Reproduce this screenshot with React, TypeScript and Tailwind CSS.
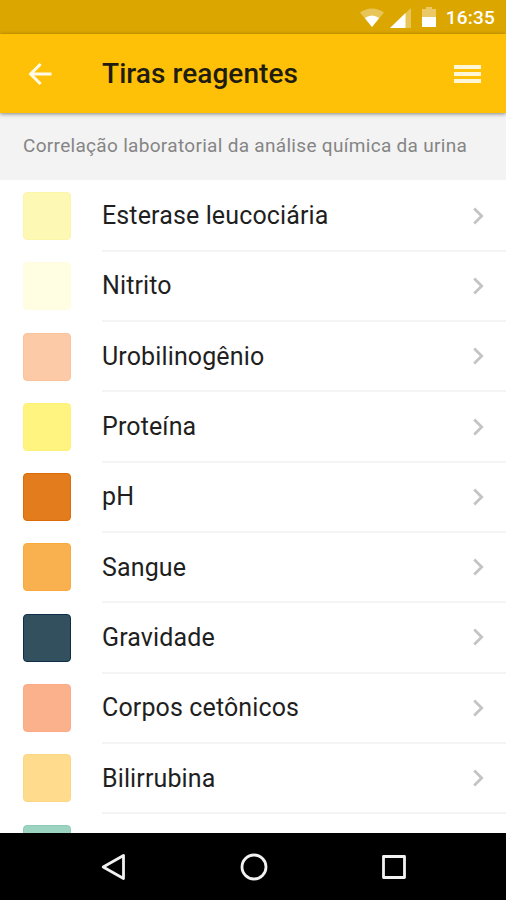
type Reagent = {
  name?: string;
  swatch: string;
};

const reagents: Reagent[] = [
  { name: 'Esterase leucociária', swatch: 'bg-[#fdf8b4] border-[#fbf6ac]' },
  { name: 'Nitrito', swatch: 'bg-[#fffee3] border-[#fffde0]' },
  { name: 'Urobilinogênio', swatch: 'bg-[#fccaa6] border-[#fac39c]' },
  { name: 'Proteína', swatch: 'bg-[#fff480] border-[#fff176]' },
  { name: 'pH', swatch: 'bg-[#e27c1c] border-[#dc6c0a]' },
  { name: 'Sangue', swatch: 'bg-[#f9b04f] border-[#fba93c]' },
  { name: 'Gravidade', swatch: 'bg-[#33505e] border-[#0f2f48]' },
  { name: 'Corpos cetônicos', swatch: 'bg-[#fcb18d] border-[#fbab86]' },
  { name: 'Bilirrubina', swatch: 'bg-[#fedb8d] border-[#fdd680]' },
  { swatch: 'bg-[#9dd3c1] border-[#8fcab6]' },
];

function StatusBar() {
  return (
    <div className="flex h-[34px] shrink-0 items-center justify-end bg-[#dca600] pr-[11px] text-white">
      <svg width="24" height="20" viewBox="0 0 24 20" className="mt-[2px] mr-[5px]">
        <path d="M0 4.5Q12-3.5 24 4.5L12 19Z" fill="#fff" opacity="0.35" />
        <path d="M4.8 10Q12 4.8 19.2 10L12 19Z" fill="#fff" />
      </svg>
      <svg width="22" height="21" viewBox="0 0 22 21" className="mt-[2px] mr-[11px]">
        <path d="M22 0V20H1Z" fill="#fff" opacity="0.35" />
        <path d="M16.5 5V20H1Z" fill="#fff" />
      </svg>
      <svg width="14" height="21" viewBox="0 0 14 21" className="mr-[10px]">
        <path d="M4 0h6v2h4v9H0V2h4z" fill="#fff" opacity="0.4" />
        <path d="M0 10h14v10H0z" fill="#fff" />
      </svg>
      <span className="text-[19px] leading-none font-medium tracking-[0.2px]">16:35</span>
    </div>
  );
}

function AppBar() {
  return (
    <header className="relative z-10 flex h-[79px] shrink-0 items-center bg-[#ffc107] pr-[25px] pl-[28px] shadow-[0_1px_4px_rgba(0,0,0,0.45)]">
      <button aria-label="Voltar">
        <svg width="24" height="24" viewBox="0 0 24 24" fill="none" stroke="#fffbe8" strokeWidth="3">
          <path d="M23.5 12H3M12.6 2L2.6 12L12.6 22" />
        </svg>
      </button>
      <h1 className="ml-[50px] flex-1 pt-px text-[28px] leading-none font-medium tracking-[0.07px] text-[#211c10]">
        Tiras reagentes
      </h1>
      <button aria-label="Menu" className="flex flex-col gap-[3px]">
        <span className="h-1 w-[27px] bg-[#fff6d8]" />
        <span className="h-1 w-[27px] bg-[#fff6d8]" />
        <span className="h-1 w-[27px] bg-[#fff6d8]" />
      </button>
    </header>
  );
}

function ReagentRow({ name, swatch }: Reagent) {
  return (
    <li className="flex h-[70.3px] shrink-0 items-stretch pl-[23px]">
      <div className={`mt-[10.5px] mr-[31px] size-12 shrink-0 rounded-[4px] border ${swatch}`} />
      <div className="flex flex-1 items-center border-b-2 border-[#f4f4f4] pr-[21px]">
        <span className="flex-1 text-[25px] leading-none tracking-[0.13px] text-[#1f1f1f]">{name}</span>
        <svg width="13" height="18" viewBox="0 0 13 18" fill="none" stroke="#c4c4c4" strokeWidth="2.8">
          <path d="M2.2 1.5L9.7 9L2.2 16.5" />
        </svg>
      </div>
    </li>
  );
}

function NavBar() {
  return (
    <nav className="flex h-[67px] shrink-0 items-center justify-between bg-black pr-[98px] pl-[100px]">
      <svg width="27" height="28" viewBox="0 0 27 28" fill="none" stroke="#f2f2f2" strokeWidth="2.8" strokeLinejoin="round">
        <path d="M23.5 2.5V25.5L3.2 14Z" />
      </svg>
      <svg width="28" height="28" viewBox="0 0 28 28" fill="none" stroke="#f2f2f2" strokeWidth="2.8">
        <circle cx="14" cy="14" r="12" />
      </svg>
      <svg width="28" height="28" viewBox="0 0 28 28" fill="none" stroke="#f2f2f2" strokeWidth="2.8" strokeLinejoin="round">
        <rect x="3.5" y="3.5" width="21" height="21" />
      </svg>
    </nav>
  );
}

export default function App() {
  return (
    <div className="flex h-[900px] w-[506px] flex-col overflow-hidden bg-white font-[Roboto,sans-serif]">
      <StatusBar />
      <AppBar />
      <div className="flex h-[67px] shrink-0 items-center bg-[#f3f3f3] pb-[2px] pl-[23px]">
        <p className="text-[19px] leading-none tracking-[0.31px] whitespace-nowrap text-[#858585]">
          Correlação laboratorial da análise química da urina
        </p>
      </div>
      <ul className="flex min-h-0 flex-1 flex-col overflow-hidden pt-[1.5px]">
        {reagents.map((reagent) => (
          <ReagentRow key={reagent.swatch} {...reagent} />
        ))}
      </ul>
      <NavBar />
    </div>
  );
}
